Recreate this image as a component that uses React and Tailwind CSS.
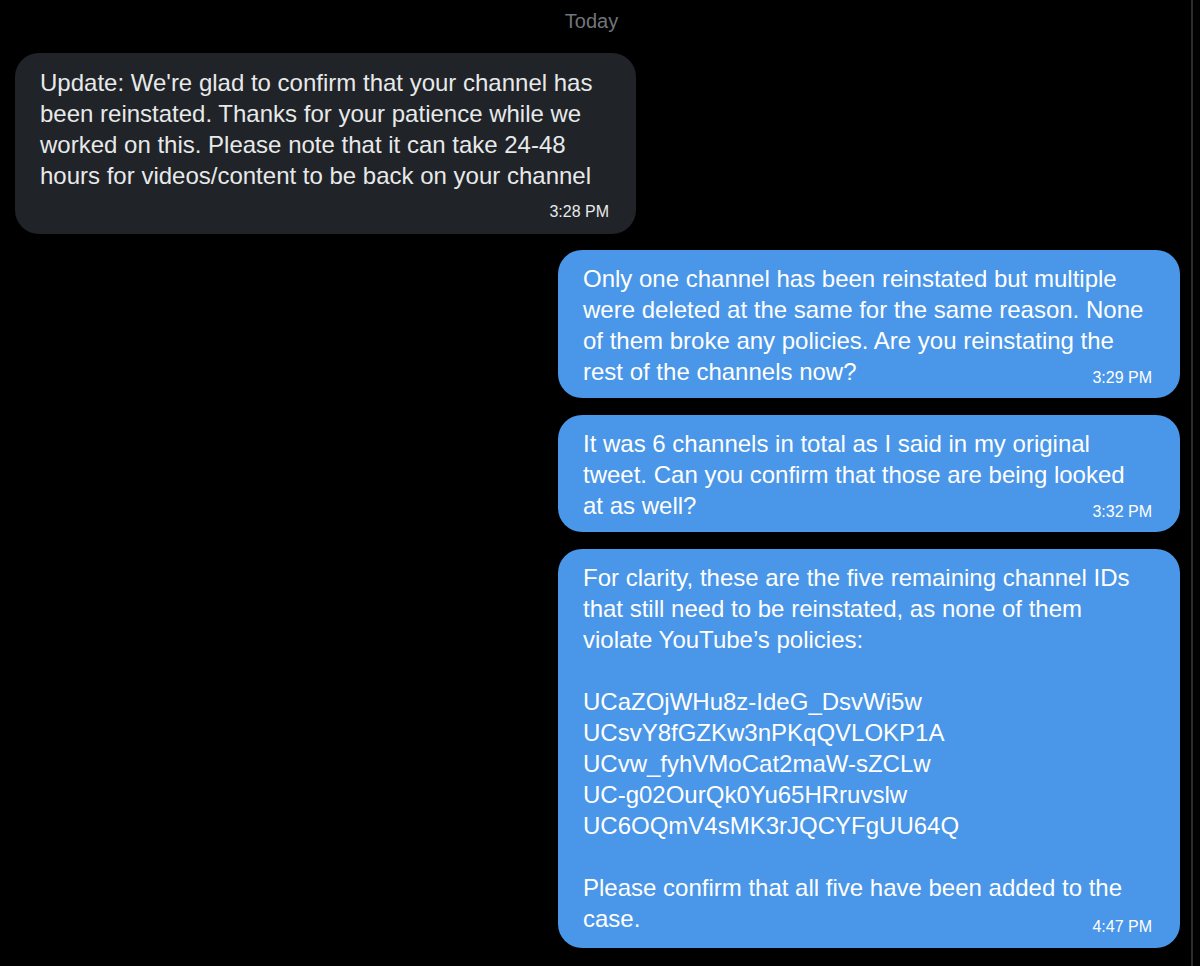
import React from "react";

const font = { fontFamily: '"Liberation Sans", Arial, sans-serif' };

function Lines({ lines, time, inlineTime, tsShift = "translate-y-[1px]" }) {
  return (
    <div>
      {lines.map((l, i) => {
        const last = i === lines.length - 1;
        if (last && inlineTime) {
          return (
            <div key={i} className="flex items-end justify-between leading-[31px] h-[31px]">
              <span className="whitespace-nowrap">{l}</span>
              <span className={`text-[16px] leading-[20px] pr-[2px] ${tsShift}`}>{time}</span>
            </div>
          );
        }
        return (
          <div key={i} className="whitespace-nowrap leading-[31px] h-[31px]">
            {l === "" ? "\u00a0" : l}
          </div>
        );
      })}
    </div>
  );
}

function BlueBubble({ lines, time, pb = "pb-[11px]", tsShift }) {
  return (
    <div className="flex justify-end">
      <div className={`w-[622px] rounded-[24px] bg-[#4a96e8] text-white text-[24px] pl-[25px] pr-[26px] pt-[13px] ${pb}`}>
        <Lines lines={lines} time={time} inlineTime tsShift={tsShift} />
      </div>
    </div>
  );
}

export default function App() {
  return (
    <div className="min-h-[966px] bg-black flex" style={font}>
      <div className="flex-1 pl-[15px] pr-[11px] pt-[9px]">
        <div className="text-center text-[20px] leading-[24px] text-[#71767b] pr-[12px]">Today</div>
        <div className="mt-[20px] w-[621px] rounded-[24px] bg-[#202327] text-[#e7e9ea] text-[24px] pl-[25px] pr-[27px] pt-[14px] pb-[12px]">
          <Lines
            lines={[
              "Update: We're glad to confirm that your channel has",
              "been reinstated. Thanks for your patience while we",
              "worked on this. Please note that it can take 24-48",
              "hours for videos/content to be back on your channel",
            ]}
          />
          <div className="mt-[11px] text-right text-[16px] leading-[20px]">3:28 PM</div>
        </div>
        <div className="mt-[16px] flex flex-col gap-[17px]">
          <BlueBubble
            time="3:29 PM"
            lines={[
              "Only one channel has been reinstated but multiple",
              "were deleted at the same for the same reason. None",
              "of them broke any policies. Are you reinstating the",
              "rest of the channels now?",
            ]}
          />
          <BlueBubble
            time="3:32 PM"
            lines={[
              "It was 6 channels in total as I said in my original",
              "tweet. Can you confirm that those are being looked",
              "at as well?",
            ]}
          />
          <BlueBubble
            time="4:47 PM"
            pb="pb-[14px]"
            tsShift="translate-y-[3px]"
            lines={[
              "For clarity, these are the five remaining channel IDs",
              "that still need to be reinstated, as none of them",
              "violate YouTube\u2019s policies:",
              "",
              "UCaZOjWHu8z-IdeG_DsvWi5w",
              "UCsvY8fGZKw3nPKqQVLOKP1A",
              "UCvw_fyhVMoCat2maW-sZCLw",
              "UC-g02OurQk0Yu65HRruvslw",
              "UC6OQmV4sMK3rJQCYFgUU64Q",
              "",
              "Please confirm that all five have been added to the",
              "case.",
            ]}
          />
        </div>
      </div>
      <div className="w-[2px] bg-[#2a2c30] mr-[7px]" />
    </div>
  );
}
